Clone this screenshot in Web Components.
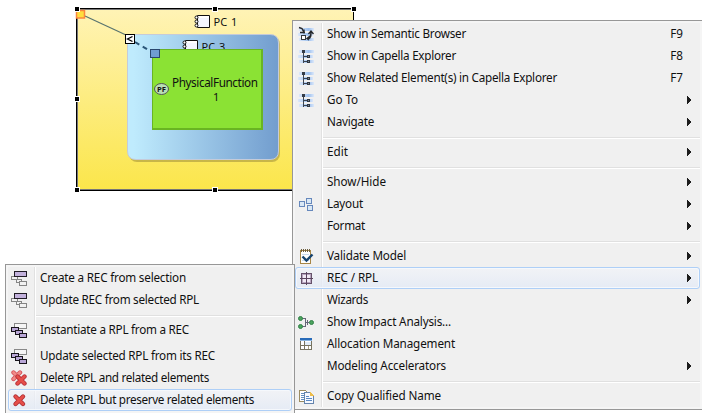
<!DOCTYPE html>
<html lang="en"><head><meta charset="utf-8"><title>Diagram context menu</title>
<style>
html,body{margin:0;width:706px;height:415px;overflow:hidden;background:#fff}
body{font:11.7px/20px "Noto Sans","Open Sans",sans-serif;color:#101010}
</style></head><body>
<app-canvas>
<diagram-view></diagram-view>
<context-menu id="main" style="left:292px;top:20px;width:410px;height:390px">
<menu-item icon="semantic" w="139" key="F9">Show in Semantic Browser</menu-item>
<menu-item icon="tree" w="129" key="F8">Show in Capella Explorer</menu-item>
<menu-item icon="tree" w="230" key="F7">Show Related Element(s) in Capella Explorer</menu-item>
<menu-item icon="tree" w="31" sub>Go To</menu-item>
<menu-item w="47" sub>Navigate</menu-item>
<menu-separator></menu-separator>
<menu-item w="21" sub>Edit</menu-item>
<menu-separator></menu-separator>
<menu-item w="59" sub>Show/Hide</menu-item>
<menu-item icon="layout" w="36" sub>Layout</menu-item>
<menu-item w="38" sub>Format</menu-item>
<menu-separator></menu-separator>
<menu-item icon="validate" w="79" sub>Validate Model</menu-item>
<menu-item icon="grid" w="51" sub selected>REC / RPL</menu-item>
<menu-item w="41" sub>Wizards</menu-item>
<menu-item icon="impact" w="124">Show Impact Analysis...</menu-item>
<menu-item icon="table" w="128">Allocation Management</menu-item>
<menu-item w="119" sub>Modeling Accelerators</menu-item>
<menu-separator></menu-separator>
<menu-item icon="copy" w="114">Copy Qualified Name</menu-item>
</context-menu>
<context-menu class="sub" style="left:5px;top:264px;width:290px;height:149px">
<menu-item icon="rec" w="146">Create a REC from selection</menu-item>
<menu-item icon="rec" w="159">Update REC from selected RPL</menu-item>
<menu-separator></menu-separator>
<menu-item icon="rpl" w="149" class="gap">Instantiate a RPL from a REC</menu-item>
<menu-item icon="rpl" w="175">Update selected RPL from its REC</menu-item>
<menu-item icon="deleteall" w="169">Delete RPL and related elements</menu-item>
<menu-item icon="delete" w="214" selected>Delete RPL but preserve related elements</menu-item>
</context-menu>
</app-canvas>
<script>
const r=(x,y,w,h,f,s)=>s?`<rect x="${x+.5}" y="${y+.5}" width="${w-1}" height="${h-1}" fill="${f}" stroke="${s}"/>`:`<rect x="${x}" y="${y}" width="${w}" height="${h}" fill="${f}"/>`;
const bands='<g shape-rendering="auto"><defs><linearGradient id="b"><stop stop-color="#dce8fa"/><stop offset=".65" stop-color="#9dc0ee"/><stop offset="1" stop-color="#dce8fa"/></linearGradient></defs>'+r(1,2,15,3,'url(#b)')+r(0,7,15,3,'url(#b)')+r(1,12,15,3,'url(#b)')+'</g>';
const cross=(x,y,w,c,e)=>`<g shape-rendering="auto" fill="none" stroke-linecap="round"><path d="M${x} ${y}l${w} ${w}m0 ${-w}l${-w} ${w}" stroke="${e}" stroke-width="4.4"/><path d="M${x} ${y}l${w} ${w}m0 ${-w}l${-w} ${w}" stroke="${c}" stroke-width="2.6"/></g>`;
const ICONS={
tree:bands+r(4,2,3,3,'#333b47')+r(5,5,1,10,'#3c4450')+r(6,8,4,1,'#3c4450')+r(6,13,4,1,'#3c4450')+r(9,7,3,3,'#77869a','#303843')+r(9,12,3,3,'#77869a','#303843'),
semantic:bands+'<path d="M1 1.500l3 1 2 4M2 6.500h5M6 3.500v4M10 12.500c3 0 3-3 3-7M10.500 8l2.500-3 2.500 3M12 10l-3 2.500 2 1.500" fill="none" stroke="#25282c" stroke-width="1.400" shape-rendering="auto"/>'+r(3,9,5,5,'#fff','#34383c'),
layout:r(1,5,6,6,'#d9e8f5','#6688bc')+r(8,2,6,6,'#d9e8f5','#6688bc')+r(9,9,6,6,'#d9e8f5','#6688bc'),
validate:r(2,2,11,14,'#fff','#a78646')+r(3,1,1,3,'#6e6040')+r(5,1,1,3,'#6e6040')+r(7,1,1,3,'#6e6040')+r(9,1,1,3,'#6e6040')+r(11,1,1,3,'#6e6040')+r(4,6,7,1,'#c9dbee')+r(4,12,7,1,'#c9dbee')+'<path d="M4.500 8.500l4 4 6-6" fill="none" stroke="#17446f" stroke-width="2.400" shape-rendering="auto"/>',
grid:r(3,3,11,11,'#f1e9f5','#66526b')+r(2,8,13,1,'#5a455f')+r(4,4,1,9,'#b7a5bf')+r(12,4,1,9,'#b7a5bf')+r(4,4,9,1,'#b7a5bf')+r(4,12,9,1,'#b7a5bf')+r(8,2,1,13,'#5a455f')+r(2,8,13,1,'#5a455f'),
impact:'<path d="M4 4.500h3v8H4M7 8.500h4M9 6v5" fill="none" stroke="#667" />'+'<g shape-rendering="auto" fill="#4ba35d" stroke="#328148"><circle cx="2.500" cy="4.500" r="2"/><circle cx="2.500" cy="12.500" r="2"/><circle cx="13.500" cy="8.500" r="2"/></g>',
table:r(2,2,12,12,'#fff','#77735f')+r(2,2,12,2,'#286bb9')+r(2,4,12,1,'#8bb5df')+r(6,5,1,9,'#77735f')+r(3,9,10,1,'#77735f')+r(10,10,1,3,'#a9a080')+r(7,6,6,3,'#e2edf7'),
copy:'<path d="M1.500 2.500h6l2 2v9h-8z" fill="#fff" stroke="#9b8d63"/><path d="M3 5h4M3 7h5M3 9h4M3 11h3" stroke="#638fc1"/><path d="M6.500 4.500h6l3 3v8h-9z" fill="#f6f9ff" stroke="#6584ac"/><path d="M12 4v4h4z" fill="#edbd4b"/><path d="M8 8.500h3M8 10.500h6M8 12.500h6" stroke="#5988c3"/>',
rec:r(0,6,7,4,'#f2f2f2','#858585')+r(5,9,6,4,'#f2f2f2','#858585')+r(8,11,8,5,'#f2f2f2','#858585')+r(3,1,13,6,'#c2b1dc','#201b25'),
rpl:r(3,1,13,6,'#f5f5f5','#888')+r(0,5,8,5,'#b9a7d7','#17131b')+r(4,8,8,5,'#b9a7d7','#17131b')+r(8,11,8,5,'#b9a7d7','#17131b'),
delete:cross(4.5,4.5,7.5,'#e64e48','#ad2f36'),
deleteall:cross(2.5,2.5,6.5,'#f08a87','#d6525a')+cross(6.5,6.5,7,'#e64e48','#b52f3b')
};
const make=(host,html)=>{const s=host.attachShadow({mode:'open'});s.innerHTML=html;return s};
customElements.define('app-canvas',class extends HTMLElement{constructor(){super();make(this,'<style>:host{display:block;position:relative;width:706px;height:413px;overflow:hidden}</style><slot></slot>')}});
customElements.define('context-menu',class extends HTMLElement{constructor(){super();make(this,`<style>
:host{display:flex;flex-direction:column;position:absolute;box-sizing:border-box;border:solid #979797;border-width:1px 0 1px 1px;padding:2px 2px 2px 2px;background:linear-gradient(90deg,#f0f0f0 26px,#e1e1e1 26px 27px,#fff 27px 28px,#f0f0f0 28px) content-box,#f5f5f5}
:host(.sub){border-right-width:1px;border-bottom-width:0}
</style><slot></slot>`)}});
customElements.define('menu-separator',class extends HTMLElement{constructor(){super();make(this,'<style>:host{display:block;height:2px;margin:4px 0 2px 28px;background:linear-gradient(#e0e0e0 50%,#fff 50%)}</style>')}});
customElements.define('menu-item',class extends HTMLElement{
constructor(){super();make(this,`<style>
:host{display:grid;grid-template-columns:32px 1fr auto 15px;height:22px;box-sizing:border-box;position:relative;white-space:nowrap}
:host(.gap){margin-bottom:4px}
:host([selected]) .hl{display:block}
.hl{display:none;position:absolute;inset:0;border:1px solid #aecff7;border-radius:3px;background:linear-gradient(#f2f4f9aa,#e3eaf6cc);box-shadow:inset 0 0 0 1px #f5f8fc}
.icon{position:relative;padding:3px 0 0 3px;height:16px}
svg{display:block;shape-rendering:crispEdges}
.label,.key,.arrow{position:relative}
.key{padding-right:2px}
.label span{display:inline-block}
.arrow{padding:7px 0 0 2px}
</style><div class="hl"></div><div class="icon"></div><div class="label"><span><slot></slot></span></div><div class="key"></div><div class="arrow"></div>`)}
connectedCallback(){const s=this.shadowRoot;const i=this.getAttribute('icon');
if(i)s.querySelector('.icon').innerHTML=`<svg width="16" height="16" viewBox="0 0 16 16">${ICONS[i]}</svg>`;
s.querySelector('.key').textContent=this.getAttribute('key')||'';
if(this.hasAttribute('sub'))s.querySelector('.arrow').innerHTML='<svg width="5" height="8" viewBox="0 0 5 8"><path d="M0 0h1l3.500 4L1 8H0z" fill="#1c1c1c"/></svg>';
const el=s.querySelector('.label span');const w=+this.getAttribute('w');
el.style.letterSpacing=((w-el.getBoundingClientRect().width)/this.textContent.length)+'px'}});
const comp='<path d="M3.500.5h12v12h-12z" fill="#f3f6ff" stroke="#111"/><path d="M4 1h11v2H4z" fill="#fff"/><g fill="#fff" stroke="#111"><circle cx="2.500" cy="2.500" r="1.500"/><circle cx="2.500" cy="6.500" r="1.500"/><circle cx="2.500" cy="10.500" r="1.500"/></g>';
customElements.define('diagram-view',class extends HTMLElement{constructor(){super();
const h=[[77,9],[215,9],[354,9],[77,99],[77,190],[215,190]].map(([x,y])=>`<rect x="${x-3}" y="${y-3}" width="6" height="6" fill="#fff"/><rect x="${x-2}" y="${y-2}" width="4" height="4"/>`).join('');
make(this,`<style>:host{display:block}svg{display:block}text{font:11.7px "Noto Sans","Open Sans",sans-serif;fill:#111}</style>
<svg width="706" height="413" viewBox="0 0 706 413"><defs>
<linearGradient id="y" x2="0" y2="1"><stop stop-color="#fff3b5"/><stop offset="1" stop-color="#fbe64b"/></linearGradient>
<linearGradient id="bl"><stop offset=".04" stop-color="#bfebfd"/><stop offset="1" stop-color="#729dce"/></linearGradient></defs>
<rect x="76" y="8" width="278" height="183" fill="#000"/><rect x="77" y="9" width="276" height="181" fill="#777"/><rect x="78" y="10" width="275" height="179" fill="url(#y)"/>
<g transform="translate(194 15)">${comp}</g><text x="213.500" y="26" style="font-size:11px;word-spacing:1px">PC 1</text>
<rect x="129" y="36" width="151" height="126" rx="8" fill="#8a7b30" opacity=".45"/>
<path d="M127.500 34.500H270q8.500 0 8.500 8.500V151q0 8.500-8.500 8.500H136q-8.500 0-8.500-8.500z" fill="url(#bl)" stroke="#c5cbd9"/>
<g transform="translate(182 40)">${comp}</g><text x="201.500" y="51" style="font-size:11px;word-spacing:1px">PC 3</text>
<rect x="152" y="49" width="111" height="81" fill="#69b522"/><rect x="153" y="50" width="108" height="78" fill="#8be234"/>
<ellipse cx="161.500" cy="89" rx="7" ry="5.500" fill="#b9dfb4" stroke="#555"/><text x="157" y="92" textLength="9" lengthAdjust="spacingAndGlyphs" style="font-size:7.500px;font-weight:bold">PF</text>
<text x="172" y="87" textLength="86">PhysicalFunction</text><text x="213" y="101" style="font-size:11px">1</text>
<path d="M85 16L126 35" stroke="#58736f" stroke-width="1.200"/><path d="M135 42l15 9" stroke="#2b5679" stroke-width="2" stroke-dasharray="5 4"/>
<rect x="125.500" y="34.500" width="9" height="9" fill="#fff" stroke="#000"/><path d="M132.500 36.500l-5 2.500 5 2.500" fill="none" stroke="#000" stroke-width="1.300"/>
<rect x="150.500" y="49.500" width="9" height="8" fill="#6f9cd2" stroke="#29466e"/>
<rect x="76.500" y="10.500" width="8" height="7.500" fill="#ffde3e" stroke="#fb863f" stroke-width="1.500"/>${h}
</svg>`)}});
</script></body></html>
